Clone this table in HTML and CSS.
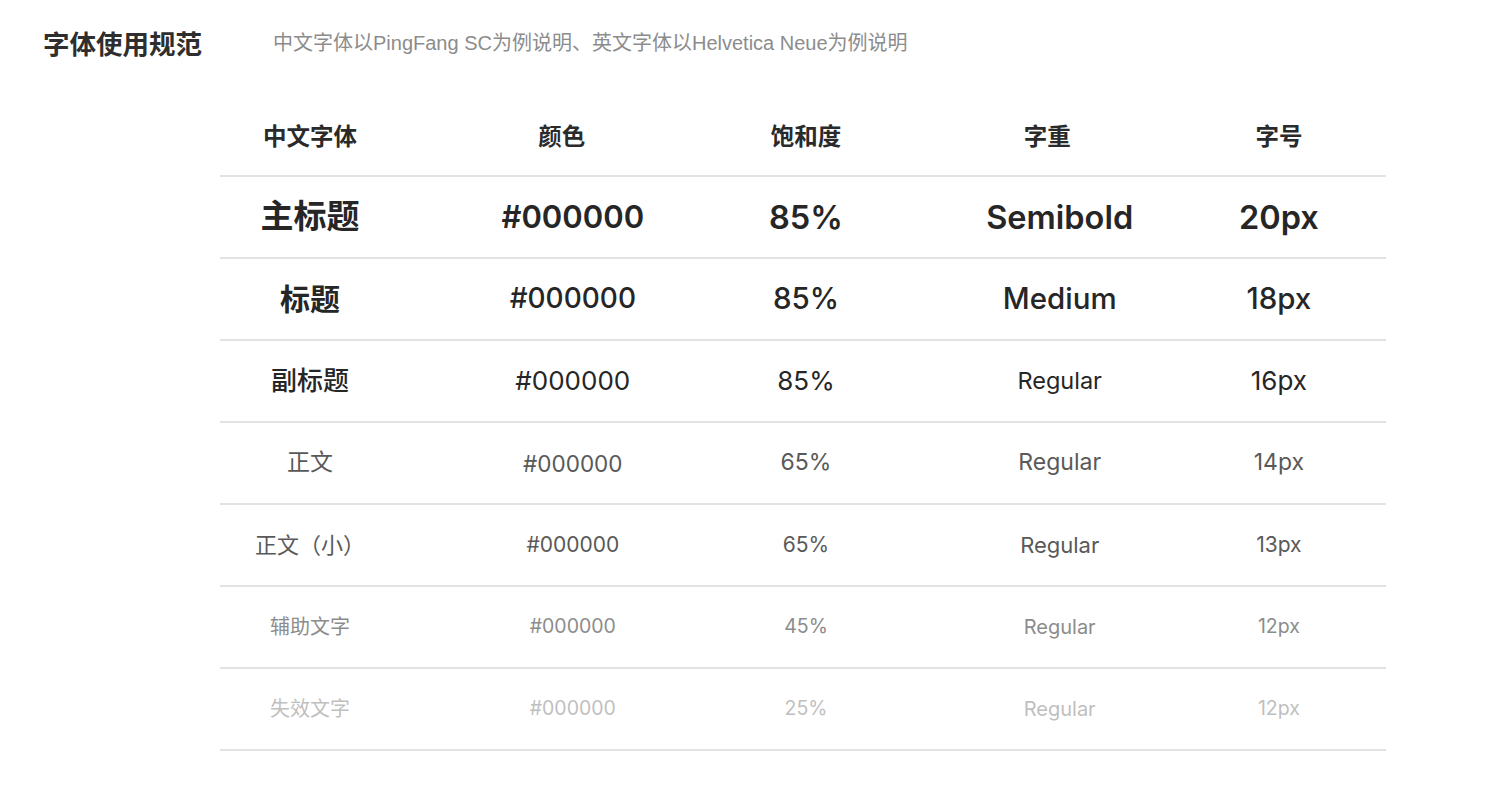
FILE: index.html
```html
<!DOCTYPE html>
<html lang="zh-CN">
<head>
<meta charset="utf-8">
<title>字体使用规范</title>
<link rel="stylesheet" href="styles.css">
</head>
<body>
<div class="page">
  <header class="head">
    <h1 class="title">字体使用规范</h1>
    <p class="desc">中文字体以PingFang SC为例说明、英文字体以Helvetica Neue为例说明</p>
  </header>
  <div class="table">
    <div class="row row-head">
      <div class="cell">中文字体</div>
      <div class="cell">颜色</div>
      <div class="cell">饱和度</div>
      <div class="cell">字重</div>
      <div class="cell">字号</div>
    </div>
    <div class="row r1">
      <div class="cell">主标题</div>
      <div class="cell hex">#000000</div>
      <div class="cell">85%</div>
      <div class="cell">Semibold</div>
      <div class="cell">20px</div>
    </div>
    <div class="row r2">
      <div class="cell">标题</div>
      <div class="cell hex">#000000</div>
      <div class="cell">85%</div>
      <div class="cell">Medium</div>
      <div class="cell">18px</div>
    </div>
    <div class="row r3">
      <div class="cell">副标题</div>
      <div class="cell hex">#000000</div>
      <div class="cell">85%</div>
      <div class="cell weight">Regular</div>
      <div class="cell">16px</div>
    </div>
    <div class="row r4">
      <div class="cell">正文</div>
      <div class="cell hex">#000000</div>
      <div class="cell">65%</div>
      <div class="cell weight">Regular</div>
      <div class="cell">14px</div>
    </div>
    <div class="row r5">
      <div class="cell">正文（小）</div>
      <div class="cell hex">#000000</div>
      <div class="cell">65%</div>
      <div class="cell weight">Regular</div>
      <div class="cell">13px</div>
    </div>
    <div class="row r6">
      <div class="cell">辅助文字</div>
      <div class="cell hex">#000000</div>
      <div class="cell">45%</div>
      <div class="cell weight">Regular</div>
      <div class="cell">12px</div>
    </div>
    <div class="row r7">
      <div class="cell">失效文字</div>
      <div class="cell hex">#000000</div>
      <div class="cell">25%</div>
      <div class="cell weight">Regular</div>
      <div class="cell">12px</div>
    </div>
  </div>
</div>
</body>
</html>
```
FILE: styles.css
```css
* { box-sizing: border-box; }
html, body { margin: 0; padding: 0; background: #fff; }
body {
  font-family: Inter, "Noto Sans CJK SC", sans-serif;
  color: #262626;
  width: 1500px;
  height: 789px;
  overflow: hidden;
}
.page { padding-top: 27px; }
.head {
  display: flex;
  align-items: center;
  height: 32px;
  padding-left: 43px;
}
.title {
  margin: 0;
  width: 230px;
  font-size: 26.5px;
  font-weight: 700;
  line-height: 32px;
  color: #2e2e2e;
  font-family: "Noto Sans CJK SC", sans-serif;
}
.desc {
  margin: 0;
  font-size: 20px;
  line-height: 32px;
  color: #8c8c8c;
  font-family: "Liberation Sans", "Noto Sans CJK SC", sans-serif;
}
.table {
  margin: 36px 0 0 220px;
  width: 1166px;
}
.row {
  display: grid;
  grid-template-columns: repeat(5, 1fr);
  height: 82px;
  border-bottom: 2px solid #e2e2e2;
  align-items: center;
  line-height: 1.2;
}
.cell { text-align: center; white-space: nowrap; }
.cell:nth-child(1) { padding-right: 53px; }
.cell:nth-child(2) { padding-left: 6px; }
.cell:nth-child(3) { padding-left: 6px; }
.cell:nth-child(4) { padding-left: 47px; }
.cell:nth-child(5) { padding-left: 19px; }

.row-head { font-size: 23.5px; font-weight: 700; color: #2a2a2a; font-family: "Noto Sans CJK SC", sans-serif; }
.row-head .cell:nth-child(2) { padding-left: 0; padding-right: 16px; }
.row-head .cell:nth-child(4) { padding-left: 22px; }

.r1 { font-size: 32.5px; font-weight: 600; color: #262626; }
.r1 .hex { font-size: 31px; }
.r1 .cell:first-child { font-size: 33px; font-weight: 700; }
.r2 { font-size: 29.5px; font-weight: 500; color: #262626; }
.r2 .hex { font-size: 28px; }
.r2 .cell:first-child { font-size: 30px; font-weight: 700; }
.r3 { font-size: 26px; font-weight: 400; color: #262626; }
.r3 .weight { font-size: 23.5px; }
.r3 .cell:first-child { font-size: 26px; font-weight: 500; }
.r4 { font-size: 23px; color: #595959; }
.r4 .hex { font-size: 22.5px; }
.r4 .cell:first-child { font-size: 23px; }
.r5 { font-size: 21px; color: #595959; }
.r5 .weight { font-size: 22px; }
.r5 .cell:first-child { font-size: 22px; }
.r6 { font-size: 19.5px; color: #8c8c8c; }
.r6 .weight { font-size: 20px; }
.r6 .cell:first-child { font-size: 20px; }
.r7 { font-size: 19.5px; color: #bfbfbf; }
.r7 .weight { font-size: 20px; }
.r7 .cell:first-child { font-size: 20px; }
```
